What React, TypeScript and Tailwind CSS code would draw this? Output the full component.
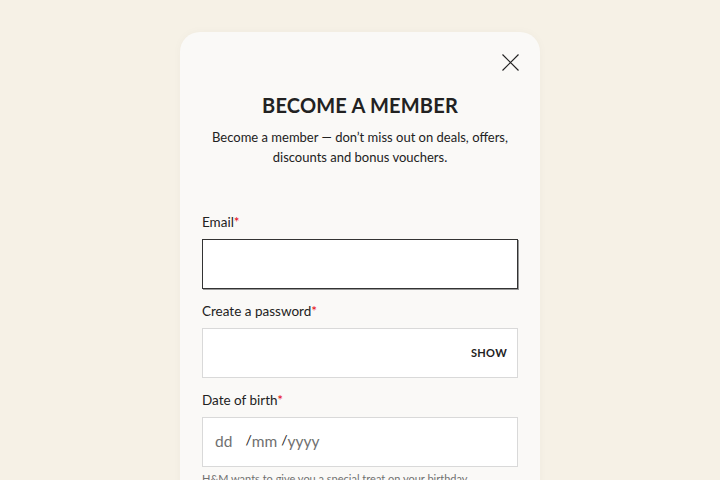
import React from 'react';

function Field({
  label,
  active,
  children,
}: {
  label: string;
  active?: boolean;
  children?: React.ReactNode;
}) {
  return (
    <div className="flex flex-col">
      <label className="text-[13.5px] leading-[16px] text-[#222]">
        {label}
        <span className="text-[#e50010]">*</span>
      </label>
      <div
        className={
          'mt-[9px] flex h-[50px] items-center bg-white px-[12px] ' +
          (active ? 'border border-[#333] shadow-[1px_1px_0_#999]' : 'border border-[#d9d9d9]')
        }
      >
        {children}
      </div>
    </div>
  );
}

export default function App() {
  return (
    <div
      className="flex h-[480px] w-[720px] justify-center overflow-hidden bg-[#f6f1e6] pt-[32px]"
      style={{ fontFamily: 'Lato, "Noto Sans", sans-serif' }}
    >
      <div className="h-[520px] w-[360px] rounded-t-[20px] bg-[#faf9f7] px-[22px] shadow-[0_0_10px_rgba(0,0,0,0.03)]">
        <div className="flex justify-end pt-[22px]">
          <button className="mr-[-1px] h-[17px] w-[17px] text-[#222]">
            <svg viewBox="0 0 17 17" width="17" height="17" fill="none" stroke="currentColor" strokeWidth="1.2">
              <path d="M0.5 0.5 L16.5 16.5 M16.5 0.5 L0.5 16.5" />
            </svg>
          </button>
        </div>
        <h1 className="mt-[22px] text-center text-[20px] font-bold leading-[24px] tracking-[0.2px] text-[#222]">
          BECOME A MEMBER
        </h1>
        <p className="mt-[10px] text-center text-[13px] leading-[20px] text-[#222]">
          Become a member — don’t miss out on deals, offers,
          <br />
          discounts and bonus vouchers.
        </p>
        <div className="mt-[47px] flex flex-col gap-[14px]">
          <Field label="Email" active />
          <Field label="Create a password">
            <span className="ml-auto mr-[-2px] text-[11px] font-bold tracking-[0.3px] text-[#222]">SHOW</span>
          </Field>
          <div>
            <Field label="Date of birth">
              <span className="text-[15.5px] text-[#707070]">dd</span>
              <span className="ml-[13px] -translate-y-[3px] text-[14px] text-[#222]">/</span>
              <span className="text-[15.5px] text-[#707070]">mm</span>
              <span className="ml-[4px] -translate-y-[3px] text-[14px] text-[#222]">/</span>
              <span className="text-[15.5px] text-[#707070]">yyyy</span>
            </Field>
            <p className="mt-[5px] text-[11px] leading-[14px] text-[#707070]">
              H&amp;M wants to give you a special treat on your birthday
            </p>
          </div>
        </div>
      </div>
    </div>
  );
}
